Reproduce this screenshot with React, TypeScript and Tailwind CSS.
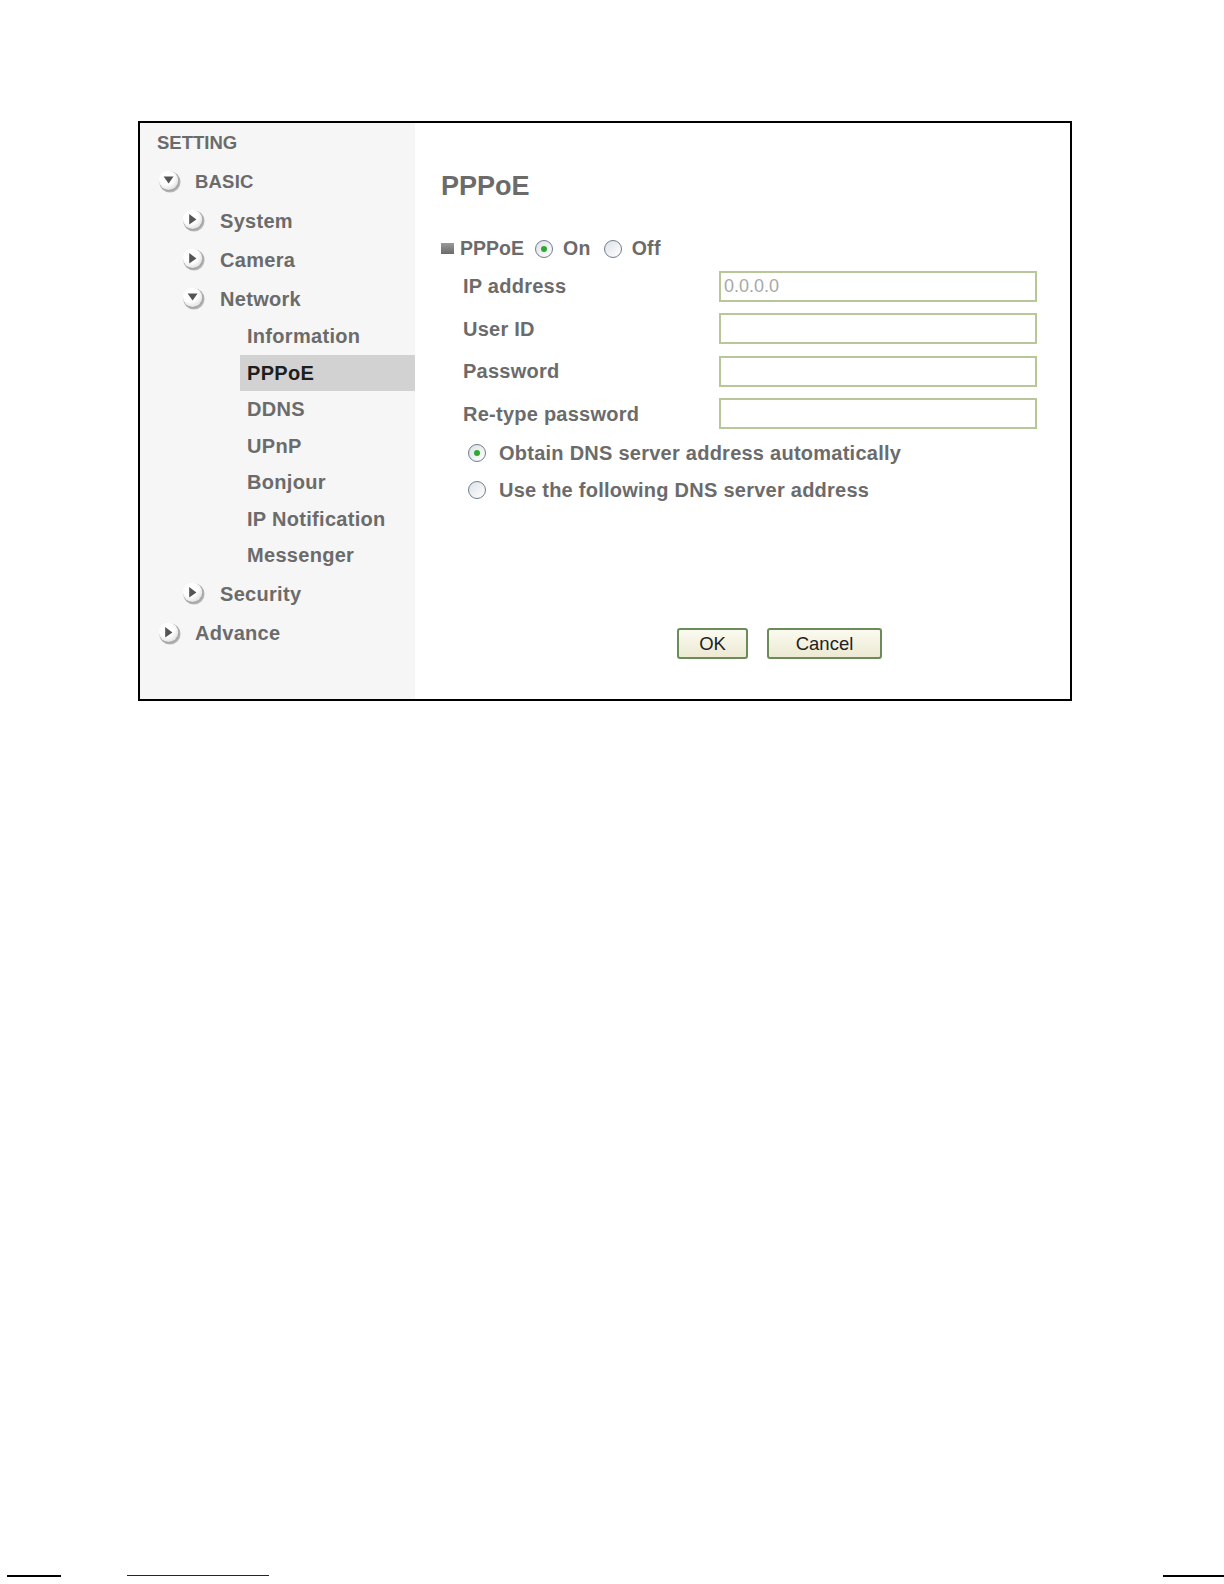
import React from "react";

const font = { fontFamily: '"Liberation Sans", Arial, Helvetica, sans-serif' };

function MenuIcon({ down }: { down?: boolean }) {
  const id = down ? "gd" : "gr";
  return (
    <svg width="23" height="23" viewBox="0 0 23 23" className="shrink-0">
      <defs>
        <radialGradient id={id} cx="40%" cy="35%" r="70%">
          <stop offset="0.55" stopColor="#ffffff" />
          <stop offset="1" stopColor="#dedede" />
        </radialGradient>
        <radialGradient id={id + "s"} cx="45%" cy="45%" r="60%">
          <stop offset="0.6" stopColor="#8e8e8e" />
          <stop offset="1" stopColor="#c8c8c8" />
        </radialGradient>
      </defs>
      <circle cx="12" cy="12" r="10.6" fill={`url(#${id}s)`} />
      <circle cx="10.6" cy="10.4" r="9.6" fill={`url(#${id})`} />
      {down ? (
        <path d="M5.6 6.6 L15.6 6.6 L10.6 13.6 Z" fill="#555555" />
      ) : (
        <path d="M7.2 5 L14.4 10.4 L7.2 15.6 Z" fill="#555555" />
      )}
    </svg>
  );
}

function Radio({ checked }: { checked?: boolean }) {
  return (
    <span className="w-[18px] h-[18px] rounded-full border border-[#6f7d8c] bg-gradient-to-br from-[#dde2e7] to-white flex items-center justify-center shrink-0">
      {checked && <span className="w-[6px] h-[6px] rounded-full bg-[#2fa82f]" />}
    </span>
  );
}

const menuText = "text-[20px] font-bold text-[#6b6b6b] tracking-[0.3px]";
const labelText = "text-[20px] font-bold text-[#6b6b6b] tracking-[0.25px]";

export default function App() {
  const sub = ["Information", "PPPoE", "DDNS", "UPnP", "Bonjour", "IP Notification", "Messenger"];
  return (
    <div className="w-[1224px] h-[1584px] bg-white flex flex-col" style={font}>
      <div className="mt-[121px] ml-[138px] w-[934px] h-[580px] border-2 border-black flex">
        {/* Sidebar */}
        <div className="w-[275px] bg-[#f6f6f6] flex flex-col">
          <div className="h-[39px] flex items-center pl-[17px] text-[18.5px] font-bold text-[#6b6b6b]">
            SETTING
          </div>
          <div className="h-[39px] flex items-center pl-[18px] gap-[14px]">
            <MenuIcon down />
            <span className="text-[18.5px] font-bold text-[#6b6b6b] tracking-[0.2px]">BASIC</span>
          </div>
          {[
            ["System", false],
            ["Camera", false],
            ["Network", true],
          ].map(([t, d]) => (
            <div key={t as string} className="h-[39px] flex items-center pl-[42px] gap-[15px]">
              <MenuIcon down={d as boolean} />
              <span className={menuText}>{t as string}</span>
            </div>
          ))}
          {sub.map((t) => (
            <div key={t} className="h-[36.5px] flex pl-[100px]">
              <div
                className={
                  t === "PPPoE"
                    ? "flex-1 pl-[7px] bg-[#d2d2d2] flex items-center"
                    : "flex-1 pl-[7px] flex items-center"
                }
              >
                {t === "PPPoE" ? (
                  <span className="text-[20px] font-bold text-[#1e1e1e] tracking-[0.3px]">{t}</span>
                ) : (
                  <span className={menuText}>{t}</span>
                )}
              </div>
            </div>
          ))}
          <div className="h-[40px] flex items-center pl-[42px] gap-[15px]">
            <MenuIcon />
            <span className={menuText}>Security</span>
          </div>
          <div className="h-[39.5px] flex items-center pl-[18px] gap-[14px]">
            <MenuIcon />
            <span className={menuText}>Advance</span>
          </div>
        </div>

        {/* Content */}
        <div className="flex-1 bg-white flex flex-col pl-[26px] pt-[47px]">
          <div className="h-[32px] flex items-center text-[27px] font-bold text-[#6b6b6b]">PPPoE</div>
          <div className="mt-[30px] h-[33px] flex items-center">
            <span className="w-[13px] h-[11px] bg-gradient-to-b from-[#9a9a9a] to-[#6a6a6a] mr-[6px]" />
            <span className="text-[19.5px] font-bold text-[#6b6b6b] mr-[11px]">PPPoE</span>
            <Radio checked />
            <span className="text-[19.5px] font-bold text-[#6b6b6b] ml-[10px] mr-[13px] tracking-[0.3px]">On</span>
            <Radio />
            <span className="text-[19.5px] font-bold text-[#6b6b6b] ml-[10px] tracking-[0.3px]">Off</span>
          </div>
          {[
            ["IP address", "0.0.0.0"],
            ["User ID", ""],
            ["Password", ""],
            ["Re-type password", ""],
          ].map(([l, v]) => (
            <div key={l} className="h-[42.5px] flex items-center pl-[22px]">
              <span className={"w-[256px] " + labelText}>{l}</span>
              <div className="w-[318px] h-[31px] border-2 border-[#b8c79a] bg-white flex items-center px-[3px] text-[18px] text-[#a8a8a8]">
                {v}
              </div>
            </div>
          ))}
          <div className="h-[36.5px] flex items-center pl-[27px] gap-[13px]">
            <Radio checked />
            <span className={labelText}>Obtain DNS server address automatically</span>
          </div>
          <div className="h-[36.5px] flex items-center pl-[27px] gap-[13px]">
            <Radio />
            <span className={labelText + " tracking-[0.4px]"}>Use the following DNS server address</span>
          </div>
          <div className="mt-[120px] flex pl-[236px] gap-[19px]">
            <button className="w-[71px] h-[31px] border-2 border-[#6b8c5a] rounded-[3px] bg-gradient-to-b from-[#fbfaf0] to-[#ecead3] text-[18.5px] text-[#222]">
              OK
            </button>
            <button className="w-[115px] h-[31px] border-2 border-[#6b8c5a] rounded-[3px] bg-gradient-to-b from-[#fbfaf0] to-[#ecead3] text-[18.5px] text-[#222]">
              Cancel
            </button>
          </div>
        </div>
      </div>

      <div className="mt-auto mb-[7px] flex items-end">
        <div className="ml-[7px] w-[54px] h-[2px] bg-black" />
        <div className="ml-[66px] w-[142px] h-[1px] bg-[#1a1a7a] mb-[1px]" />
        <div className="ml-auto w-[61px] h-[2px] bg-black" />
      </div>
    </div>
  );
}
